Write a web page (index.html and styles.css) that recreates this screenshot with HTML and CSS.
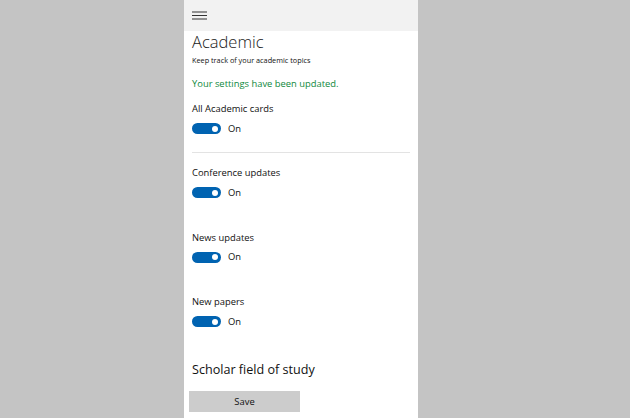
FILE: index.html
```html
<!DOCTYPE html>
<html>
<head>
<meta charset="utf-8">
<link rel="stylesheet" href="styles.css">
</head>
<body>
<div class="panel">
  <div class="header">
    <svg class="burger" width="15" height="10" viewBox="0 0 15 10">
      <rect x="0" y="0.5" width="15" height="1" fill="#333"/>
      <rect x="0" y="4" width="15" height="1" fill="#333"/>
      <rect x="0" y="7.5" width="15" height="1" fill="#333"/>
    </svg>
  </div>
  <div class="content">
    <h1 class="title">Academic</h1>
    <p class="subtitle">Keep track of your academic topics</p>
    <p class="status">Your settings have been updated.</p>

    <div class="setting">
      <div class="label">All Academic cards</div>
      <div class="toggle-row"><span class="toggle"><span class="thumb"></span></span><span class="state">On</span></div>
    </div>
    <div class="divider"></div>
    <div class="setting first">
      <div class="label">Conference updates</div>
      <div class="toggle-row"><span class="toggle"><span class="thumb"></span></span><span class="state">On</span></div>
    </div>
    <div class="setting">
      <div class="label">News updates</div>
      <div class="toggle-row"><span class="toggle"><span class="thumb"></span></span><span class="state">On</span></div>
    </div>
    <div class="setting">
      <div class="label">New papers</div>
      <div class="toggle-row"><span class="toggle"><span class="thumb"></span></span><span class="state">On</span></div>
    </div>
    <h2 class="section">Scholar field of study</h2>
    <button class="save">Save</button>
  </div>
</div>
</body>
</html>
```
FILE: styles.css
```css
html, body {
  margin: 0;
  padding: 0;
  height: 100%;
}
body {
  background: #c4c4c4;
  font-family: "Open Sans", "Noto Sans", sans-serif;
  color: #111;
}
.panel {
  margin-left: 184px;
  width: 234px;
  height: 418px;
  background: #ffffff;
  overflow: hidden;
}
.header {
  height: 31px;
  background: #f2f2f2;
  display: flex;
  align-items: center;
  padding-left: 8px;
}
.burger {
  display: block;
  margin-top: 1px;
}
.content {
  padding: 0 8px;
  display: flex;
  flex-direction: column;
  align-items: flex-start;
}
.title {
  margin: 1px 0 0 0;
  font-size: 16.5px;
  line-height: 20px;
  font-weight: 300;
  color: #1a1a1a;
}
.subtitle {
  margin: 3px 0 0 0;
  font-size: 7.3px;
  line-height: 10px;
}
.status {
  margin: 12px 0 0 0;
  font-size: 9.4px;
  line-height: 14px;
  color: #10893e;
}
.setting {
  margin-top: 32px;
}
.status + .setting {
  margin-top: 11px;
}
.setting.first {
  margin-top: 13px;
}
.label {
  font-size: 9.4px;
  line-height: 14px;
}
.toggle-row {
  margin-top: 6.5px;
  height: 12px;
  display: flex;
  align-items: center;
}
.toggle {
  width: 29px;
  height: 11px;
  border-radius: 6px;
  background: #0063b1;
  display: flex;
  align-items: center;
  justify-content: flex-end;
  padding-right: 3px;
  box-sizing: border-box;
}
.thumb {
  width: 6px;
  height: 6px;
  border-radius: 50%;
  background: #fff;
}
.state {
  margin-left: 7px;
  font-size: 9.4px;
  line-height: 12px;
}
.divider {
  align-self: stretch;
  height: 1px;
  background: #e3e3e3;
  margin-top: 17.5px;
}
.section {
  margin: 33px 0 0 0;
  font-size: 12.6px;
  line-height: 18px;
  font-weight: 400;
}
.save {
  margin: 12.5px 0 0 -3px;
  width: 111px;
  height: 21px;
  border: none;
  background: #cccccc;
  font-family: "Open Sans", "Noto Sans", sans-serif;
  font-size: 9.4px;
  color: #111;
  padding: 0;
}
```
